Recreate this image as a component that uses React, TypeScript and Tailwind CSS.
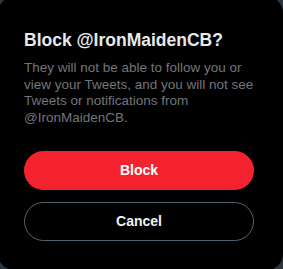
export default function App() {
  return (
    <div className="w-[283px] h-[269px] overflow-hidden bg-[#2c353c] font-['Liberation_Sans',Arial,sans-serif]">
      <div className="-mt-[3px] -ml-[2px] w-[285px] h-[273px] rounded-2xl bg-black pl-[26px] pt-[31px]">
        <h1 className="text-[17.5px] leading-[24px] font-bold text-[#e7e9ea]">
          Block @IronMaidenCB?
        </h1>
        <p className="mt-[8px] w-[240px] text-[13.5px] leading-[16.5px] text-[#71767b]">
          They will not be able to follow you or view your Tweets, and you will
          not see Tweets or notifications from @IronMaidenCB.
        </p>
        <div className="mt-[25px] flex flex-col gap-[12px] w-[230px]">
          <button className="h-[39px] rounded-full bg-[#f4212e] text-[14px] font-bold text-white">
            Block
          </button>
          <button className="h-[39px] rounded-full border border-[#536471] text-[14px] font-bold text-[#eff3f4]">
            Cancel
          </button>
        </div>
      </div>
    </div>
  );
}
